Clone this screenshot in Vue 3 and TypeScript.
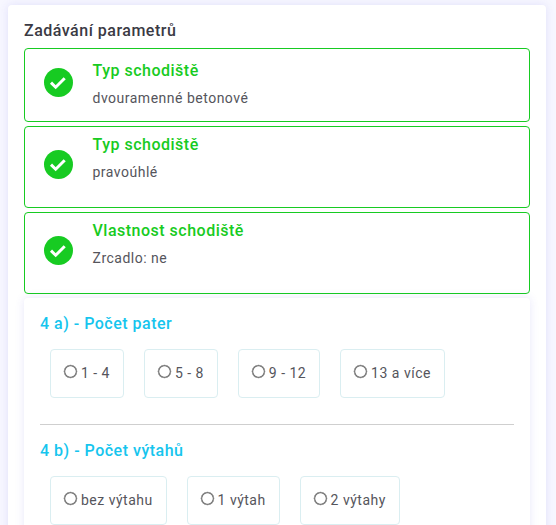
<script setup lang="ts">
interface DoneStep {
  title: string
  value: string
  tall: boolean
}

interface Question {
  id: string
  title: string
  options: string[]
}

const doneSteps: DoneStep[] = [
  { title: 'Typ schodiště', value: 'dvouramenné betonové', tall: false },
  { title: 'Typ schodiště', value: 'pravoúhlé', tall: true },
  { title: 'Vlastnost schodiště', value: 'Zrcadlo: ne', tall: true },
]

const questions: Question[] = [
  { id: 'floors', title: '4 a) - Počet pater', options: ['1 - 4', '5 - 8', '9 - 12', '13 a více'] },
  { id: 'lifts', title: '4 b) - Počet výtahů', options: ['bez výtahu', '1 výtah', '2 výtahy'] },
]
</script>

<template>
  <main class="page">
    <section class="card">
      <h1 class="heading">Zadávání parametrů</h1>
      <div v-for="(step, i) in doneSteps" :key="i" class="done" :class="{ tall: step.tall }">
        <svg class="check" viewBox="0 0 29 29" aria-hidden="true">
          <circle cx="14.5" cy="14.5" r="14.5" fill="#17cb22" />
          <path d="M7 14.6 L11.7 19.2 L20.7 10.2" fill="none" stroke="#fff" stroke-width="3" />
        </svg>
        <div class="done-text">
          <h2 class="done-title">{{ step.title }}</h2>
          <p class="done-value">{{ step.value }}</p>
        </div>
      </div>
      <form class="panel">
        <fieldset v-for="q in questions" :key="q.id" class="question">
          <h2 class="question-title">{{ q.title }}</h2>
          <div class="options">
            <label v-for="option in q.options" :key="option" class="option">
              <input class="radio" type="radio" :name="q.id" :value="option" />
              <span>{{ option }}</span>
            </label>
          </div>
        </fieldset>
      </form>
    </section>
  </main>
</template>

<style>
body {
  background: #f7f7ff;
}
</style>

<style scoped>
.page {
  box-sizing: border-box;
  height: 525px;
  padding: 5px 10px 0 8px;
  overflow: hidden;
  background: #f7f7ff;
  color: #55555c;
  font-family: Roboto, "Liberation Sans", sans-serif;
  font-size: 14px;
  letter-spacing: 0.5px;
}

.card {
  box-sizing: border-box;
  height: 620px;
  padding: 16px 16px 0;
  border-radius: 4px;
  background: #fff;
  box-shadow: 0 0 10px rgba(80, 70, 220, 0.13);
}

.heading,
.done-title,
.question-title {
  margin: 0;
  font-size: 16px;
  font-weight: 500;
  line-height: 20px;
}

.heading {
  margin-bottom: 7px;
  color: #3a3a44;
}

.done {
  display: flex;
  align-items: flex-start;
  box-sizing: border-box;
  height: 74px;
  margin-bottom: 4px;
  padding: 0 19px;
  border: 1px solid #17cb22;
  border-radius: 4px;
}

.done.tall {
  height: 82px;
}

.check {
  flex: none;
  width: 29px;
  height: 29px;
  margin-top: 19px;
}

.done.tall .check {
  margin-top: 23px;
}

.done-text {
  padding: 12px 0 0 19.5px;
}

.done.tall .done-text {
  padding-top: 8px;
}

.done-title {
  color: #17cb22;
}

.done-value {
  margin: 8px 0 0;
  line-height: 18px;
}

.panel {
  height: 320px;
  padding: 16px 16px 0;
  border-radius: 4px;
  background: #fff;
  box-shadow: 0 0 10px rgba(80, 70, 220, 0.13);
}

.question {
  min-width: 0;
  margin: 0;
  padding: 0;
  border: 0;
}

.question + .question {
  margin-top: 26px;
  padding-top: 16px;
  border-top: 1px solid #cfcfcf;
}

.question-title {
  color: #16c5ee;
}

.options {
  display: flex;
  gap: 20px;
  padding: 15px 10px 0;
}

.option {
  display: flex;
  align-items: center;
  box-sizing: border-box;
  height: 49px;
  padding: 0 12.95px 0 13px;
  border: 1px solid #daeef1;
  border-radius: 4px;
  line-height: 18px;
  white-space: nowrap;
}

.option span {
  margin-top: -1px;
}

.radio {
  flex: none;
  width: 13px;
  height: 13px;
  margin: -4px 3.95px 0 0;
  appearance: none;
  border-radius: 50%;
  background: radial-gradient(circle, #fff 4.8px, #767676 5.5px);
  box-shadow: 0 0 0 0.25px #767676;
}

.radio:checked {
  background: radial-gradient(circle, #16c5ee 3px, #fff 3.5px 4.8px, #767676 5.5px);
}
</style>
